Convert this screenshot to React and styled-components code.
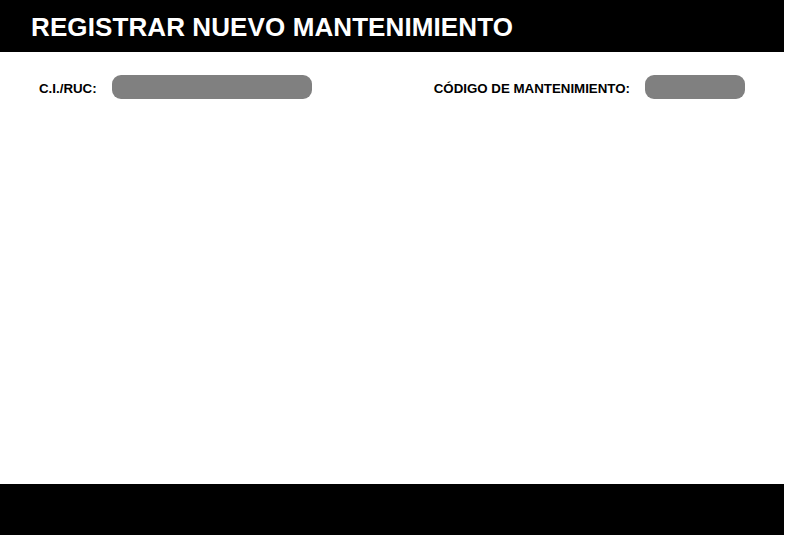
import React from 'react';
import styled, { createGlobalStyle } from 'styled-components';

const GlobalStyle = createGlobalStyle`
  html, body {
    margin: 0;
    padding: 0;
    background: #fff;
  }
  #root {
    min-height: 100vh;
  }
`;

// Contenedor principal
const Page = styled.div`
  font-family: 'Liberation Sans', Arial, sans-serif;
  min-height: 100vh;
  display: flex;
  flex-direction: column;
  background: #fff;
`;

// Barra superior con el titulo
const Header = styled.header`
  background: #000;
  height: 52px;
  margin-right: 1px;
  display: flex;
  align-items: center;
  padding-left: 31px;
  padding-top: 2px;
  box-sizing: border-box;
`;

const Title = styled.h1`
  margin: 0;
  color: #fff;
  font-size: 26px;
  font-weight: 700;
  letter-spacing: 0.1px;
  line-height: 1;
`;

const Main = styled.main`
  flex: 1;
  padding: 23px 40px 0 39px;
`;

const Row = styled.div`
  display: flex;
  justify-content: space-between;
  align-items: center;
`;

const Field = styled.div`
  display: flex;
  align-items: center;
  gap: ${(p) => p.$gap || 15}px;
`;

const Label = styled.label`
  font-size: 13.3px;
  font-weight: 700;
  color: #000;
  padding-top: 3px;
`;

// Campo gris redondeado
const Input = styled.div`
  width: ${(p) => p.$width}px;
  height: 24px;
  border-radius: 9px;
  background: #808080;
`;

const Footer = styled.footer`
  background: #000;
  height: 51px;
  margin-right: 1px;
`;

function App() {
  return (
    <Page>
      <GlobalStyle />
      <Header>
        <Title>REGISTRAR NUEVO MANTENIMIENTO</Title>
      </Header>

      <Main>
        <Row>
          <Field>
            <Label>C.I./RUC:</Label>
            <Input $width={200} />
          </Field>
          <Field>
            <Label>CÓDIGO DE MANTENIMIENTO:</Label>
            <Input $width={100} />
          </Field>
        </Row>
      </Main>

      <Footer />
    </Page>
  );
}

export default App;
